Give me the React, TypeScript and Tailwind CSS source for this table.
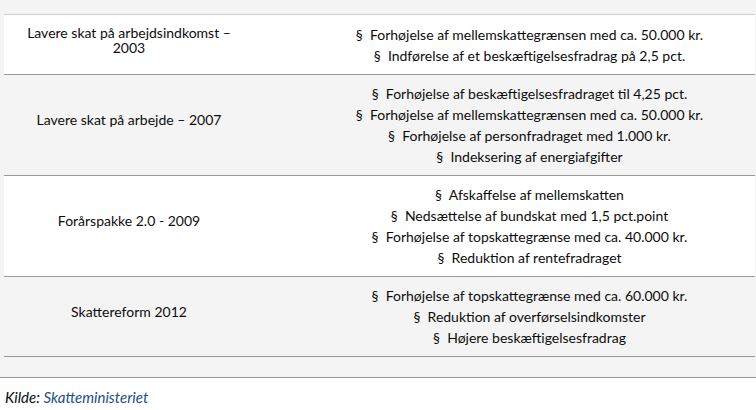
import React from 'react';

type Row = { title: string; items: string[]; shade: boolean };

const rows: Row[] = [
  {
    title: 'Lavere skat på arbejdsindkomst – 2003',
    items: [
      'Forhøjelse af mellemskattegrænsen med ca. 50.000 kr.',
      'Indførelse af et beskæftigelsesfradrag på 2,5 pct.',
    ],
    shade: false,
  },
  {
    title: 'Lavere skat på arbejde – 2007',
    items: [
      'Forhøjelse af beskæftigelsesfradraget til 4,25 pct.',
      'Forhøjelse af mellemskattegrænsen med ca. 50.000 kr.',
      'Forhøjelse af personfradraget med 1.000 kr.',
      'Indeksering af energiafgifter',
    ],
    shade: true,
  },
  {
    title: 'Forårspakke 2.0 - 2009',
    items: [
      'Afskaffelse af mellemskatten',
      'Nedsættelse af bundskat med 1,5 pct.point',
      'Forhøjelse af topskattegrænse med ca. 40.000 kr.',
      'Reduktion af rentefradraget',
    ],
    shade: false,
  },
  {
    title: 'Skattereform 2012',
    items: [
      'Forhøjelse af topskattegrænse med ca. 60.000 kr.',
      'Reduktion af overførselsindkomster',
      'Højere beskæftigelsesfradrag',
    ],
    shade: true,
  },
];

export default function App() {
  return (
    <div className="w-[756px] h-[410px] bg-white text-[#0d0d0d] font-['Lato','Liberation_Sans',sans-serif] text-[14px] overflow-hidden">
      <div className="bg-[#f4f4f4] pt-[14px] pb-[20px] border-b border-[#999]">
        <div className="ml-[4px] mr-[1px] border-t border-[#cfcfcf]">
          {rows.map((row, i) => (
            <div
              key={row.title}
              className={`flex items-center border-b border-[#999] ${row.shade ? 'bg-[#f4f4f4]' : 'bg-white'} ${i === 0 ? 'pt-px' : ''}`}
            >
              <div className="w-[250px] shrink-0 px-[14px] pb-[11px] text-center leading-[15px]">
                {row.title}
              </div>
              <div className="flex-1 pl-[50px] pt-[8px] pb-[8px] text-center leading-[21px]">
                {row.items.map((item) => (
                  <div key={item}>§&nbsp; {item}</div>
                ))}
              </div>
            </div>
          ))}
        </div>
      </div>
      <div className="px-[5px] pt-[8px] text-[15px] italic">
        Kilde: <a className="text-[#1d4e89]">Skatteministeriet</a>
      </div>
    </div>
  );
}
